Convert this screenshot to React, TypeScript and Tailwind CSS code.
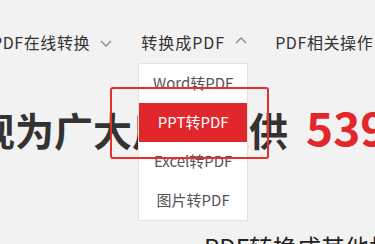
import React from "react";

function Chevron({ up = false }: { up?: boolean }) {
  return (
    <svg width="12" height="7" viewBox="0 0 12 7" className="block">
      <polyline
        points={up ? "1,6 6,1 11,6" : "1,1 6,6 11,1"}
        fill="none"
        stroke="#8a8a8a"
        strokeWidth="1.4"
      />
    </svg>
  );
}

const items = ["Word转PDF", "PPT转PDF", "Excel转PDF", "图片转PDF"];

export default function App() {
  return (
    <div className="relative w-[375px] h-[244px] overflow-hidden bg-[#f2f2f2] font-['Noto_Sans_CJK_SC','Noto_Sans',sans-serif] text-[#333]">
      <nav className="flex h-[63px] items-center pt-[21px] ml-[-8px] text-[16px] tracking-[0.6px] whitespace-nowrap">
        <div className="flex items-center">
          <span>PDF在线转换</span>
          <span className="ml-[10px] mt-[2px]">
            <Chevron />
          </span>
        </div>
        <div className="relative flex items-center ml-[29px]">
          <span className="tracking-[1px]">转换成PDF</span>
          <span className="ml-[10px] mt-[-4px]">
            <Chevron up />
          </span>
          <div className="absolute left-[-3px] top-[33px] z-10 w-[110px] border border-[#e2e2e2] bg-white tracking-normal">
            {items.map((t, i) => (
              <div
                key={t}
                className={
                  i === 1
                    ? "flex h-[39px] items-center justify-center bg-[#e1262c] text-[15px] text-white"
                    : "flex h-[39px] items-center justify-center text-[15px] text-[#555]"
                }
              >
                {t}
              </div>
            ))}
          </div>
        </div>
        <div className="ml-[28px]">PDF相关操作</div>
      </nav>

      <h1 className="mt-[44px] ml-[-24px] flex h-[39px] items-baseline whitespace-nowrap font-bold text-[39px] leading-[39px] text-[#333]">
        <span>现为广大用户提供</span>
        <span className="ml-[18px] text-[46px] leading-[39px] text-[#e1262c]">539</span>
      </h1>

      <p className="mt-[89px] ml-[204px] whitespace-nowrap text-[24px] leading-[24px] text-[#222]">
        PDF转换成其他格式
      </p>

      <div className="pointer-events-none absolute left-[110px] top-[87px] z-20 h-[72px] w-[159px] rounded-[3px] border-2 border-[#e5302b]" />
    </div>
  );
}
